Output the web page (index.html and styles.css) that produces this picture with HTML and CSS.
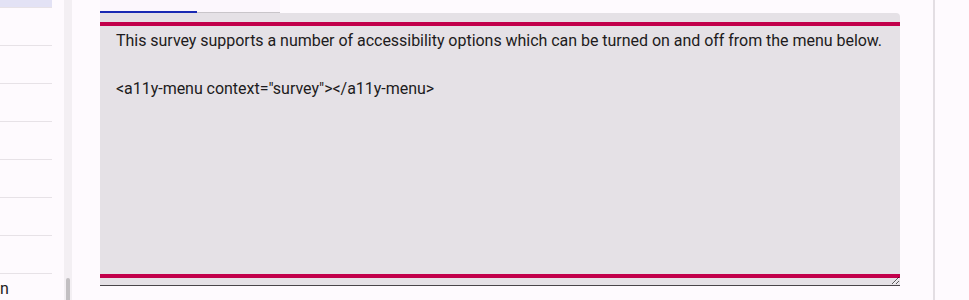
FILE: index.html
```html
<!DOCTYPE html>
<html lang="en">
<head>
    <meta charset="UTF-8">
    <meta name="viewport" content="width=device-width, initial-scale=1.0">
    <title>Survey accessibility</title>
    <link rel="stylesheet" href="styles.css">
</head>
<body>

    <!-- Side list -->
    <div class="side">
        <ul class="side-list">
            <li class="side-item selected"></li>
            <li class="side-item"></li>
            <li class="side-item"></li>
            <li class="side-item"></li>
            <li class="side-item"></li>
            <li class="side-item"></li>
            <li class="side-item"></li>
            <li class="side-item"></li>
            <li class="side-item last"><span class="cut">n</span></li>
        </ul>
    </div>
    <div class="side-scroll"><div class="thumb"></div></div>

    <!-- Editor -->
    <div class="main">
        <div class="tabs">
            <div class="tab active"></div>
            <div class="tab"></div>
        </div>
        <textarea class="editor" spellcheck="false">This survey supports a number of accessibility options which can be turned on and off from the menu below.

&lt;a11y-menu context="survey"&gt;&lt;/a11y-menu&gt;</textarea>
    </div>
    <div class="rest"></div>

</body>
</html>
```

FILE: styles.css
```css
/* Page */
body {
    margin: 0;
    height: 300px;
    overflow: hidden;
    display: flex;
    background-color: #fefafe;
    font-family: Roboto, "Liberation Sans", sans-serif;
    color: #1d1b20;
}

/* Side list */
.side {
    width: 64px;
    flex-shrink: 0;
}

.side-list {
    list-style: none;
    margin: 0;
    padding: 0;
    width: 52px;
}

.side-item {
    height: 37px;
    border-bottom: 1px solid #e7e2e7;
    position: relative;
}

.side-item.selected {
    height: 7px;
    background-color: #e3e2f5;
}

.cut {
    position: absolute;
    left: 0;
    top: 5px;
    font-size: 16px;
    line-height: 20px;
}

.side-scroll {
    width: 8px;
    flex-shrink: 0;
    background-color: #f3eff3;
    display: flex;
    flex-direction: column;
    justify-content: flex-end;
    align-items: center;
}

.thumb {
    width: 4px;
    height: 22px;
    background-color: #c2bfc2;
    border-radius: 2px 2px 0 0;
}

/* Editor area */
.main {
    width: 800px;
    padding: 0 33px 0 28px;
    border-right: 2px solid #e3dee3;
    display: flex;
    flex-direction: column;
}

.tabs {
    display: flex;
    width: 180px;
    height: 13px;
    background-color: #fcf7fd;
}

.tab {
    flex: 1;
    border-bottom: 1px solid #c9c5ca;
}

.tab.active {
    flex: 0 0 97px;
    border-bottom: 2px solid #1a2ab3;
    box-sizing: border-box;
    height: 13px;
}

.tab:not(.active) {
    height: 12px;
}

.editor {
    box-sizing: border-box;
    width: 800px;
    height: 273px;
    margin: 0;
    padding: 16px 4px 0 16px;
    border: none;
    border-bottom: 1px solid #49454a;
    border-radius: 0 4px 0 0;
    outline: none;
    background:
        linear-gradient(#c2004b, #c2004b) 0 9px / 100% 4px no-repeat,
        linear-gradient(#c2004b, #c2004b) 0 261px / 100% 4px no-repeat,
        #e5e1e6;
    font-family: Roboto, "Liberation Sans", sans-serif;
    font-size: 16px;
    line-height: 24px;
    letter-spacing: -0.03px;
    color: #1d1b20;
    resize: both;
}

.rest {
    flex: 1;
}
```
